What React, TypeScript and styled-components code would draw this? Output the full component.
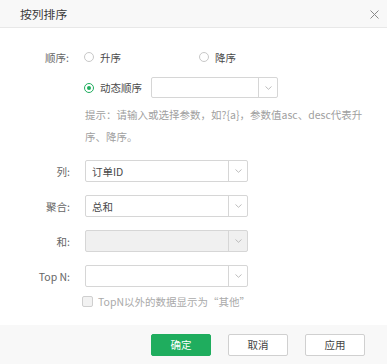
import React from 'react';
import styled, { createGlobalStyle } from 'styled-components';

const GlobalStyle = createGlobalStyle`
  html, body {
    margin: 0;
    padding: 0;
    background: #ffffff;
  }
  body {
    font-family: "Noto Sans CJK SC", "Noto Sans", sans-serif;
    color: #444;
  }
`;

const Dialog = styled.div`
  width: 387px;
  height: 364px;
  display: flex;
  flex-direction: column;
  background: #fff;
  overflow: hidden;
`;

const Header = styled.div`
  height: 27px;
  flex: none;
  display: flex;
  align-items: center;
  justify-content: space-between;
  padding: 0 8px 0 20px;
  background: #f8f8f8;
  border-bottom: 1px solid #e8e8e8;
`;

const Title = styled.div`
  font-size: 11.8px;
  color: #3a3a3a;
  line-height: 1;
`;

const Close = styled.svg`
  width: 9px;
  height: 9px;
  margin-top: 1px;
`;

const Body = styled.div`
  flex: 1;
  padding-top: 19px;
  display: flex;
  flex-direction: column;
`;

const Row = styled.div<{ $mt?: number; $h?: number }>`
  display: grid;
  grid-template-columns: 70px 1fr;
  column-gap: 15px;
  align-items: center;
  margin-top: ${(p) => p.$mt ?? 0}px;
  height: ${(p) => p.$h ?? 22}px;
`;

const Label = styled.div<{ $dx?: number }>`
  text-align: right;
  font-size: 10.5px;
  color: #666;
  padding-right: ${(p) => p.$dx ?? 0}px;
`;

const Inline = styled.div`
  display: flex;
  align-items: center;
  gap: 9px;
`;

const RadioOption = styled.label<{ $w?: number }>`
  display: flex;
  align-items: center;
  width: ${(p) => (p.$w ? `${p.$w - 9}px` : 'auto')};
  font-size: 10.5px;
  color: #4a4a4a;
  cursor: pointer;
`;

const RadioDot = styled.span<{ $checked?: boolean }>`
  width: 10px;
  height: 10px;
  margin-left: -1px;
  margin-right: 6px;
  border-radius: 50%;
  box-sizing: border-box;
  border: 1px solid ${(p) => (p.$checked ? '#1fad5e' : '#c8c8c8')};
  background: #fff;
  display: flex;
  align-items: center;
  justify-content: center;
  &::after {
    content: '';
    display: ${(p) => (p.$checked ? 'block' : 'none')};
    width: 4px;
    height: 4px;
    border-radius: 50%;
    background: #1fad5e;
  }
`;

const Select = styled.div<{ $w: number; $h?: number; $disabled?: boolean }>`
  width: ${(p) => p.$w}px;
  height: ${(p) => p.$h ?? 22}px;
  box-sizing: border-box;
  border: 1px solid #d6d6d6;
  border-radius: 2px;
  background: ${(p) => (p.$disabled ? '#f0f0f0' : '#fff')};
  display: flex;
  align-items: stretch;
`;

const SelectValue = styled.div`
  flex: 1;
  display: flex;
  align-items: center;
  padding-left: 6px;
  font-size: 10.5px;
  color: #4a4a4a;
`;

const Arrow = styled.div`
  width: 18px;
  border-left: 1px solid #d6d6d6;
  display: flex;
  align-items: center;
  justify-content: center;
`;

const Hint = styled.div`
  margin: 6px 0 0 85px;
  width: 282px;
  font-size: 10.5px;
  line-height: 22px;
  color: #a0a0a0;
`;

const CheckRow = styled.label`
  margin: 7px 0 0 82px;
  display: flex;
  align-items: center;
  font-size: 10.5px;
  color: #aaa;
`;

const CheckBox = styled.span`
  width: 11px;
  height: 11px;
  box-sizing: border-box;
  border: 1px solid #cfcfcf;
  border-radius: 2px;
  background: #f2f2f2;
  margin-right: 5px;
`;

const Footer = styled.div`
  height: 39px;
  flex: none;
  background: #f8f8f8;
  display: flex;
  align-items: center;
  justify-content: flex-end;
  gap: 17px;
  padding-right: 22px;
`;

const Button = styled.button<{ $primary?: boolean }>`
  width: 60px;
  height: 22px;
  border-radius: 2px;
  font-family: inherit;
  font-size: 10.5px;
  padding: 0;
  cursor: pointer;
  border: 1px solid ${(p) => (p.$primary ? '#1fad5e' : '#d0d0d0')};
  background: ${(p) => (p.$primary ? '#1fad5e' : '#fff')};
  color: ${(p) => (p.$primary ? '#fff' : '#444')};
`;

const hintText = '提示：请输入或选择参数，如?{a}，参数值asc、desc代表升序、降序。';

function Chevron() {
  return (
    <svg width="7" height="4" viewBox="0 0 7 4">
      <path d="M0.5 0.5 L3.5 3.3 L6.5 0.5" fill="none" stroke="#b5b5b5" strokeWidth="0.9" />
    </svg>
  );
}

function Dropdown({ width, height, value, disabled }: { width: number; height?: number; value?: string; disabled?: boolean }) {
  return (
    <Select $w={width} $h={height} $disabled={disabled}>
      <SelectValue>{value}</SelectValue>
      <Arrow>
        <Chevron />
      </Arrow>
    </Select>
  );
}

export default function App() {
  return (
    <>
      <GlobalStyle />
      <Dialog>
        <Header>
          <Title>按列排序</Title>
          <Close viewBox="0 0 9 9">
            <path d="M0.5 0.5 L8.5 8.5 M8.5 0.5 L0.5 8.5" stroke="#8a8a8a" strokeWidth="1" />
          </Close>
        </Header>
        <Body>
          <Row $h={20}>
            <Label $dx={1}>顺序:</Label>
            <Inline>
              <RadioOption $w={115}>
                <RadioDot />
                升序
              </RadioOption>
              <RadioOption>
                <RadioDot />
                降序
              </RadioOption>
            </Inline>
          </Row>
          <Row $mt={10} $h={21}>
            <span />
            <Inline>
              <RadioOption>
                <RadioDot $checked />
                动态顺序
              </RadioOption>
              <Dropdown width={127} height={21} />
            </Inline>
          </Row>
          <Hint>{hintText}</Hint>
          <Row $mt={12}>
            <Label>列:</Label>
            <Dropdown width={163} value="订单ID" />
          </Row>
          <Row $mt={13}>
            <Label>聚合:</Label>
            <Dropdown width={163} value="总和" />
          </Row>
          <Row $mt={13}>
            <Label>和:</Label>
            <Dropdown width={163} disabled />
          </Row>
          <Row $mt={13}>
            <Label>Top N:</Label>
            <Dropdown width={163} />
          </Row>
          <CheckRow>
            <CheckBox />
            TopN以外的数据显示为“其他”
          </CheckRow>
        </Body>
        <Footer>
          <Button $primary>确定</Button>
          <Button>取消</Button>
          <Button>应用</Button>
        </Footer>
      </Dialog>
    </>
  );
}
